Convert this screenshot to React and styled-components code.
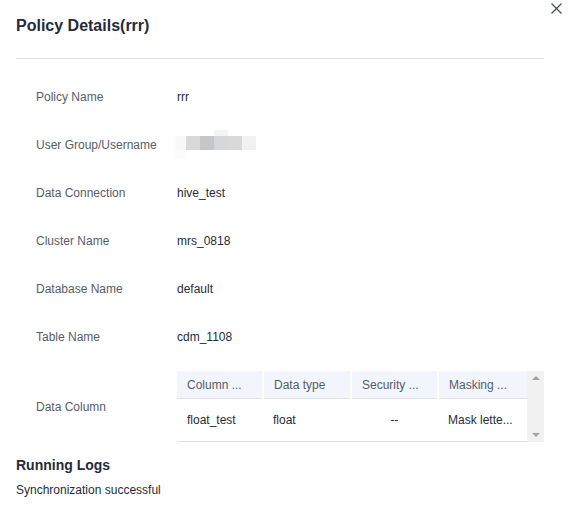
import React from "react";
import styled, { createGlobalStyle } from "styled-components";

const GlobalStyle = createGlobalStyle`
  body {
    margin: 0;
    background: #ffffff;
    font-family: "Liberation Sans", Arial, sans-serif;
  }
`;

const details = [
  { label: "Policy Name", value: "rrr" },
  { label: "User Group/Username", blurred: true },
  { label: "Data Connection", value: "hive_test" },
  { label: "Cluster Name", value: "mrs_0818" },
  { label: "Database Name", value: "default" },
  { label: "Table Name", value: "cdm_1108" },
];

const columns = [
  { title: "Column ...", width: 86 },
  { title: "Data type", width: 88 },
  { title: "Security ...", width: 87 },
  { title: "Masking ...", width: 89 },
];

const rows = [["float_test", "float", "--", "Mask lette..."]];

// pixelated blocks standing in for the hidden user name
const BlurredName = () => (
  <svg width="82" height="30" viewBox="0 0 82 30">
    <rect x="39" y="0" width="14" height="6" fill="#f4f6f6" />
    <rect x="0" y="6" width="11" height="14" fill="#f8f8f8" />
    <rect x="11" y="6" width="14" height="14" fill="#d9d9d9" />
    <rect x="25" y="6" width="14" height="14" fill="#c6c6ca" />
    <rect x="39" y="6" width="14" height="14" fill="#d5d7db" />
    <rect x="53" y="6" width="14" height="14" fill="#d9d9d9" />
    <rect x="67" y="6" width="14" height="14" fill="#f2f2f2" />
    <rect x="0" y="20" width="10" height="8" fill="#fbfbfb" />
  </svg>
);

const App = () => {
  return (
    <>
      <GlobalStyle />
      <Modal>
        <CloseButton aria-label="close">
          <svg width="11" height="11" viewBox="0 0 11 11">
            <path d="M0.5 0.5 L10.5 10.5 M10.5 0.5 L0.5 10.5" stroke="#4b5060" strokeWidth="1.3" />
          </svg>
        </CloseButton>
        <Header>
          <Title>Policy Details(rrr)</Title>
        </Header>
        <Divider />
        <DetailList>
          {details.map((d) => (
            <DetailRow key={d.label}>
              <Label>{d.label}</Label>
              <Value blurred={d.blurred}>{d.blurred ? <BlurredName /> : d.value}</Value>
            </DetailRow>
          ))}
          <DetailRow tall>
            <Label>Data Column</Label>
            <TableWrap>
              <Table>
                <colgroup>
                  {columns.map((c) => (
                    <col key={c.title} style={{ width: c.width }} />
                  ))}
                </colgroup>
                <thead>
                  <tr>
                    {columns.map((c) => (
                      <Th key={c.title}>{c.title}</Th>
                    ))}
                  </tr>
                </thead>
                <tbody>
                  {rows.map((r, i) => (
                    <tr key={i}>
                      {r.map((cell, j) => (
                        <Td key={j} center={cell === "--"}>
                          {cell}
                        </Td>
                      ))}
                    </tr>
                  ))}
                </tbody>
              </Table>
              <ScrollBar>
                <Arrow />
                <Arrow down />
              </ScrollBar>
            </TableWrap>
          </DetailRow>
        </DetailList>
        <SectionTitle>Running Logs</SectionTitle>
        <LogText>Synchronization successful</LogText>
      </Modal>
    </>
  );
};

const Modal = styled.div`
  position: relative;
  width: 569px;
  height: 513px;
  box-sizing: border-box;
  padding: 0 25px 0 16px;
  background: #ffffff;
  overflow: hidden;
`;

const CloseButton = styled.button`
  position: absolute;
  top: 3px;
  right: 7px;
  width: 11px;
  height: 11px;
  padding: 0;
  border: none;
  background: none;
  display: flex;
`;

const Header = styled.div`
  padding-top: 15px;
`;

const Title = styled.h2`
  margin: 0;
  font-size: 16px;
  line-height: 22px;
  font-weight: bold;
  color: #252b3a;
`;

const Divider = styled.div`
  margin-top: 21px;
  height: 1px;
  background: #dfe1e6;
`;

const DetailList = styled.div`
  padding: 14px 0 0 20px;
`;

const DetailRow = styled.div`
  display: flex;
  align-items: center;
  min-height: 48px;
  padding: ${(p) => (p.tall ? "10px 0" : "0")};
`;

const Label = styled.div`
  width: 141px;
  flex-shrink: 0;
  font-size: 12px;
  color: #575d6c;
`;

const Value = styled.div`
  font-size: 12px;
  color: #252b3a;
  display: flex;
  align-items: center;
  margin-left: ${(p) => (p.blurred ? "-2px" : "0")};
`;

const TableWrap = styled.div`
  display: flex;
  width: 367px;
`;

const Table = styled.table`
  width: 350px;
  table-layout: fixed;
  border-collapse: collapse;
  font-size: 12px;
`;

const Th = styled.th`
  height: 27px;
  padding: 0 10px;
  background: #f2f5fc;
  border-right: 2px solid #ffffff;
  text-align: left;
  font-weight: normal;
  color: #575d6c;
  white-space: nowrap;
  overflow: hidden;
  &:last-child {
    border-right: none;
  }
`;

const Td = styled.td`
  height: 42px;
  padding: 0 10px;
  border-top: 1px solid #dfe1e6;
  border-bottom: 1px solid #dfe1e6;
  color: #252b3a;
  text-align: ${(p) => (p.center ? "center" : "left")};
  white-space: nowrap;
  overflow: hidden;
`;

const ScrollBar = styled.div`
  width: 17px;
  background: #f1f1f1;
  display: flex;
  flex-direction: column;
  justify-content: space-between;
  align-items: center;
  padding: 5px 0;
`;

const Arrow = styled.div`
  width: 0;
  height: 0;
  border-left: 4px solid transparent;
  border-right: 4px solid transparent;
  ${(p) =>
    p.down
      ? "border-top: 4px solid #a3a3a3;"
      : "border-bottom: 4px solid #a3a3a3;"}
`;

const SectionTitle = styled.h3`
  margin: 3px 0 0;
  font-size: 14px;
  line-height: 20px;
  font-weight: bold;
  color: #252b3a;
`;

const LogText = styled.div`
  margin-top: 6px;
  font-size: 12px;
  line-height: 18px;
  color: #252b3a;
`;

export default App;
